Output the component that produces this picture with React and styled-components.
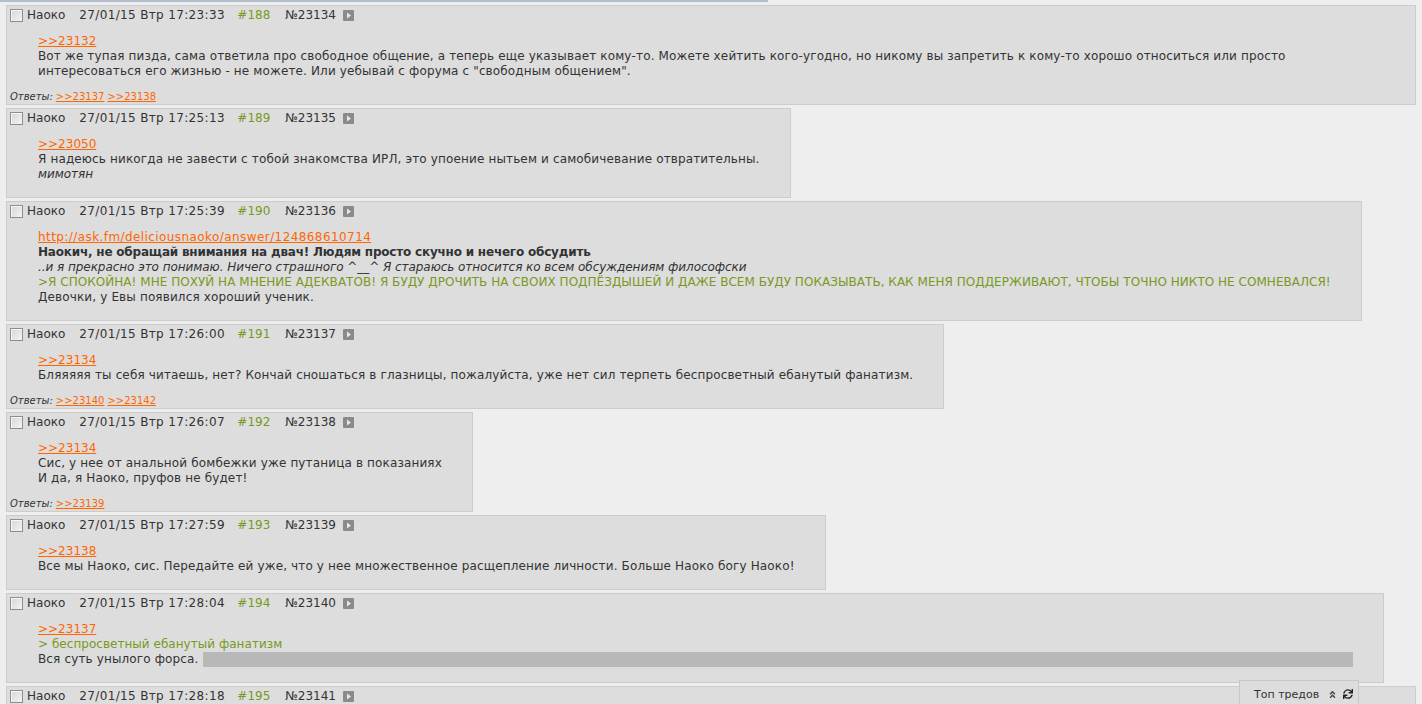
import React from 'react';
import styled, { createGlobalStyle } from 'styled-components';
import { FaAngleDoubleUp, FaSync } from 'react-icons/fa';

const Global = createGlobalStyle`
  html, body { margin: 0; padding: 0; overflow: hidden; background: #eeeeee; }
  body {
    font-family: "DejaVu Sans", Verdana, sans-serif;
    font-size: 12px;
    color: #333333;
  }
`;

const TopRule = styled.div`
  width: 768px;
  height: 2px;
  background: #b3bfcc;
`;

const Thread = styled.div`
  padding: 3px 6px 0;
`;

const Post = styled.div`
  display: ${(p) => (p.$full ? 'block' : 'table')};
  box-sizing: border-box;
  background: #dddddd;
  border: 1px solid #cccccc;
  padding: 1px 3px ${(p) => (p.$hasReplies ? '1px' : '0')};
  margin-bottom: 3px;
`;

const Header = styled.div`
  display: flex;
  align-items: center;
  height: 16px;
  line-height: 16px;
  white-space: nowrap;
`;

const Check = styled.input.attrs({ type: 'checkbox' })`
  appearance: none;
  -webkit-appearance: none;
  box-sizing: border-box;
  width: 13px;
  height: 13px;
  margin: 0 4px 0 0;
  border: 1px solid #8e8e8e;
  background: linear-gradient(135deg, #d6d6d6 0%, #f4f4f4 100%);
  box-shadow: inset 1px 1px 0 #f8f8f8;
`;

const Name = styled.span`
  margin-right: 14px;
`;

const Date = styled.span`
  width: 158px;
  letter-spacing: 0.35px;
`;

const PostNum = styled.span`
  width: 48px;
  color: #789922;
`;

const PostId = styled.span`
  margin-right: 7px;
`;

const Body = styled.div`
  margin: 11px 27px ${(p) => (p.$hasReplies ? '12px' : '15px')} 28px;
  line-height: 15px;
`;

const spacing = { text: '0.14px', bold: '-0.2px', italic: '-0.05px', quote: '0.03px', link: '0', url: '0.42px' };

const Line = styled.div`
  color: ${(p) => (p.$kind === 'quote' ? '#789922' : 'inherit')};
  font-weight: ${(p) => (p.$kind === 'bold' ? 'bold' : 'normal')};
  font-style: ${(p) => (p.$kind === 'italic' ? 'italic' : 'normal')};
  letter-spacing: ${(p) => spacing[p.$kind]};
`;

const Link = styled.a`
  color: #ff6600;
  text-decoration: underline;
`;

const Spoiler = styled.span`
  display: inline-block;
  vertical-align: top;
  height: 15px;
  background: #b8b8b8;
`;

const Replies = styled.div`
  font-size: 10px;
  line-height: 12px;
`;

const RepliesLabel = styled.em`
  margin-right: 3px;
`;

const ReplyLink = styled(Link)`
  margin-right: 3px;
`;

const TopWidget = styled.div`
  position: fixed;
  right: 63px;
  bottom: -6px;
  box-sizing: border-box;
  width: 120px;
  height: 30px;
  padding: 3px 6px 0 14px;
  background: #dddddd;
  border: 1px solid #c8c8c8;
  font-size: 11px;
  line-height: 14px;
  display: flex;
  align-items: flex-start;
  white-space: nowrap;
`;

const WidgetTitle = styled.span`
  margin-right: 9px;
  margin-top: 4px;
`;

const WidgetIcon = styled.span`
  display: inline-flex;
  color: ${(p) => p.$color};
  margin-right: ${(p) => p.$gap || 0}px;
  margin-top: ${(p) => p.$top || 0}px;
`;

function PlayIcon() {
  return (
    <svg width="11" height="11" viewBox="0 0 11 11">
      <rect x="0" y="0" width="11" height="11" rx="1" fill="#8a8a8a" />
      <path d="M4 2.5 L8 5.5 L4 8.5 Z" fill="#e8e8e8" />
    </svg>
  );
}

const posts = [
  {
    n: 188, id: 23134, time: '17:23:33',
    lines: [
      { k: 'link', v: '>>23132' },
      { k: 'text', v: 'Вот же тупая пизда, сама ответила про свободное общение, а теперь еще указывает кому-то. Можете хейтить кого-угодно, но никому вы запретить к кому-то хорошо относиться или просто интересоваться его жизнью - не можете. Или уебывай с форума с "свободным общением".' },
    ],
    replies: ['>>23137', '>>23138'],
  },
  {
    n: 189, id: 23135, time: '17:25:13',
    lines: [
      { k: 'link', v: '>>23050' },
      { k: 'text', v: 'Я надеюсь никогда не завести с тобой знакомства ИРЛ, это упоение нытьем и самобичевание отвратительны.' },
      { k: 'italic', v: 'мимотян' },
    ],
  },
  {
    n: 190, id: 23136, time: '17:25:39',
    lines: [
      { k: 'url', v: 'http://ask.fm/deliciousnaoko/answer/124868610714' },
      { k: 'bold', v: 'Наокич, не обращай внимания на двач! Людям просто скучно и нечего обсудить' },
      { k: 'italic', v: '..и я прекрасно это понимаю. Ничего страшного ^__^ Я стараюсь относится ко всем обсуждениям философски' },
      { k: 'quote', v: '>Я СПОКОЙНА! МНЕ ПОХУЙ НА МНЕНИЕ АДЕКВАТОВ! Я БУДУ ДРОЧИТЬ НА СВОИХ ПОДПЁЗДЫШЕЙ И ДАЖЕ ВСЕМ БУДУ ПОКАЗЫВАТЬ, КАК МЕНЯ ПОДДЕРЖИВАЮТ, ЧТОБЫ ТОЧНО НИКТО НЕ СОМНЕВАЛСЯ!' },
      { k: 'text', v: 'Девочки, у Евы появился хороший ученик.' },
    ],
  },
  {
    n: 191, id: 23137, time: '17:26:00',
    lines: [
      { k: 'link', v: '>>23134' },
      { k: 'text', v: 'Бляяяяя ты себя читаешь, нет? Кончай сношаться в глазницы, пожалуйста, уже нет сил терпеть беспросветный ебанутый фанатизм.' },
    ],
    replies: ['>>23140', '>>23142'],
  },
  {
    n: 192, id: 23138, time: '17:26:07',
    lines: [
      { k: 'link', v: '>>23134' },
      { k: 'text', v: 'Сис, у нее от анальной бомбежки уже путаница в показаниях' },
      { k: 'text', v: 'И да, я Наоко, пруфов не будет!' },
    ],
    replies: ['>>23139'],
  },
  {
    n: 193, id: 23139, time: '17:27:59',
    lines: [
      { k: 'link', v: '>>23138' },
      { k: 'text', v: 'Все мы Наоко, сис. Передайте ей уже, что у нее множественное расщепление личности. Больше Наоко богу Наоко!' },
    ],
  },
  {
    n: 194, id: 23140, time: '17:28:04',
    lines: [
      { k: 'link', v: '>>23137' },
      { k: 'quote', v: '> беспросветный ебанутый фанатизм' },
      { k: 'text', v: 'Вся суть унылого форса. ', spoiler: 1150 },
    ],
  },
  {
    n: 195, id: 23141, time: '17:28:18', full: true, lines: [],
  },
];

function PostView({ p }) {
  const hasReplies = !!p.replies;
  return (
    <Post $full={p.full} $hasReplies={hasReplies}>
      <Header>
        <Check />
        <Name>Наоко</Name>
        <Date>27/01/15 Втр {p.time}</Date>
        <PostNum>#{p.n}</PostNum>
        <PostId>№{p.id}</PostId>
        <PlayIcon />
      </Header>
      {p.lines.length > 0 && (
        <Body $hasReplies={hasReplies}>
          {p.lines.map((l, i) => (
            <Line key={i} $kind={l.k}>
              {l.k === 'link' || l.k === 'url' ? <Link href="#">{l.v}</Link> : l.v}
              {l.spoiler && <Spoiler style={{ width: l.spoiler }} />}
            </Line>
          ))}
        </Body>
      )}
      {hasReplies && (
        <Replies>
          <RepliesLabel>Ответы:</RepliesLabel>
          {p.replies.map((r) => (
            <ReplyLink key={r} href="#">{r}</ReplyLink>
          ))}
        </Replies>
      )}
    </Post>
  );
}

export default function App() {
  return (
    <>
      <Global />
      <TopRule />
      <Thread>
        {posts.map((p) => (
          <PostView key={p.id} p={p} />
        ))}
      </Thread>
      <TopWidget>
        <WidgetTitle>Топ тредов</WidgetTitle>
        <WidgetIcon $color="#444" $gap={6} $top={6}><FaAngleDoubleUp size={9} /></WidgetIcon>
        <WidgetIcon $color="#222" $top={5}><FaSync size={10} /></WidgetIcon>
      </TopWidget>
    </>
  );
}
